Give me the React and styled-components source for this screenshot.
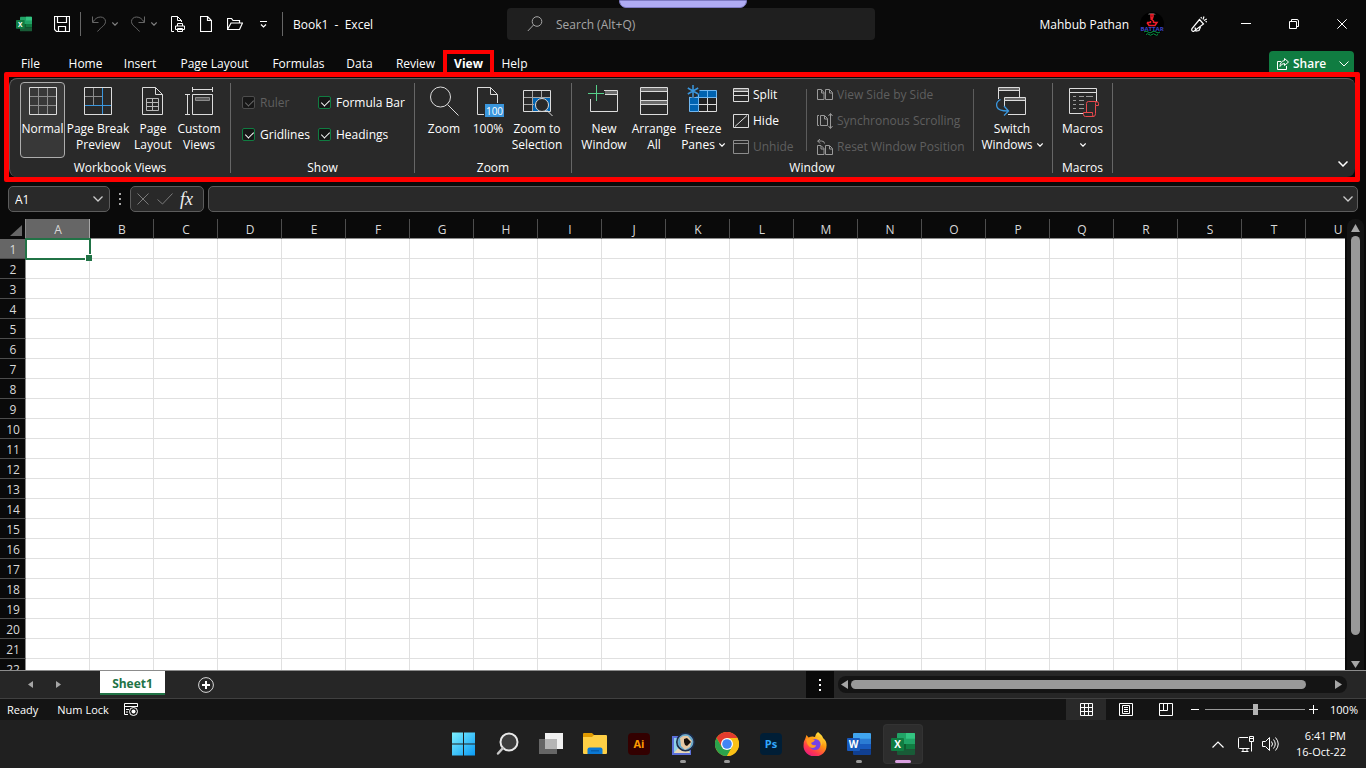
import React, {Component} from 'react';
import styled, {createGlobalStyle, css} from 'styled-components';

const GlobalStyle = createGlobalStyle`
  * { box-sizing: border-box; }
  body {
    margin: 0;
    background: #0a0a0a;
    color: #ffffff;
    font-family: "Open Sans", "Noto Sans", sans-serif;
    font-size: 12px;
    line-height: 16px;
  }
  button, input {
    font: inherit;
    color: inherit;
    background: none;
    border: 0;
    padding: 0;
    margin: 0;
  }
  svg { display: block; flex: none; }
`;

const Window = styled.div`
  display: flex;
  flex-direction: column;
  height: 100vh;
  overflow: hidden;
`;

const Row = styled.div`
  display: flex;
  align-items: center;
`;

/* title bar */
const TitleBar = styled.header`
  position: relative;
  display: grid;
  grid-template-columns: 507px minmax(200px, 368px) 1fr;
  align-items: center;
  height: 48px;
`;
const DragHandle = styled.div`
  position: absolute;
  top: 0;
  left: 50%;
  width: 128px;
  height: 8px;
  margin-left: -64px;
  background: #b0acf4;
  border: 1px solid #7f7bc4;
  border-radius: 0 0 7px 7px;
`;
const QuickAccess = styled(Row)`
  padding-left: 16px;
`;
const IconButton = styled.button`
  display: flex;
  align-items: center;
  justify-content: center;
  width: ${props => props.$w || 16}px;
  height: ${props => props.$h || 24}px;
  margin-left: ${props => props.$gap || 0}px;
  color: ${props => props.$color || '#ffffff'};
`;
const TitleLine = styled.span`
  width: 1px;
  height: 24px;
  margin-left: ${props => props.$gap}px;
  background: #666666;
`;
const TitleText = styled.span`
  padding-top: 2px;
  white-space: pre;
`;
const BookTitle = styled(TitleText)`
  margin-left: 10px;
`;
const SearchBox = styled.label`
  display: flex;
  align-items: center;
  gap: 13px;
  height: 32px;
  padding-left: 20px;
  background: #1f1f1f;
  border-radius: 4px;
  color: #a6a6a6;
  input {
    flex: 1;
    padding-top: 2px;
    outline: 0;
  }
  input::placeholder { color: #a6a6a6; opacity: 1; }
`;
const Account = styled(Row)`
  justify-content: flex-end;
`;
const Avatar = styled.svg`
  margin: 0 19px 0 11px;
`;

/* ribbon tabs */
const TabBar = styled.nav`
  display: flex;
  align-items: flex-end;
  height: 24px;
  padding: 0 12px 0 7px;
`;
const Tab = styled.button`
  width: ${props => props.$w}px;
  height: 22px;
  padding-top: 5px;
  white-space: nowrap;
  ${props => props.$active && css`
    padding-top: 1px;
    border: 4px solid #ff0000;
    border-bottom: 0;
    font-weight: 700;
  `}
`;
const ShareButton = styled.button`
  display: flex;
  align-items: center;
  width: 85px;
  height: 21px;
  margin-left: auto;
  padding: 5px 5px 0 8px;
  background: #107c41;
  border-radius: 4px 4px 0 0;
  font-weight: 600;
  svg:first-child { margin-right: 4px; }
  svg:last-child { margin-left: auto; }
`;

/* ribbon */
const RibbonFrame = styled.section`
  height: 110px;
  margin: 0 6px 0 4px;
  padding-top: 1px;
  border: 5px solid #ff0000;
  border-radius: 2px;
`;
const Ribbon = styled.div`
  display: flex;
  height: 99px;
  padding: 4px 0;
  background: #292929;
  border: 1px solid #5c5c5c;
  border-width: 1px 0 0 1px;
  border-radius: 8px;
`;
const Group = styled.div`
  display: flex;
  flex-direction: column;
  justify-content: space-between;
  width: ${props => props.$w}px;
  height: 90px;
  border-right: 1px solid #666666;
`;
const GroupBody = styled.div`
  display: flex;
  height: 76px;
  margin-top: -1px;
  padding-left: ${props => props.$pad || 0}px;
`;
const GroupLabel = styled.div`
  height: 14px;
  line-height: 18px;
  text-align: center;
`;
const BigButton = styled.button`
  display: flex;
  flex-direction: column;
  align-items: center;
  width: ${props => props.$w}px;
  height: 76px;
  padding-top: 3px;
  border-radius: 4px;
  white-space: nowrap;
  svg + span { margin-top: 4px; }
  ${props => props.$active && css`
    padding-top: 2px;
    background: #383838;
    border: 1px solid #adadad;
  `}
`;
const LabelLine = styled.span`
  display: flex;
  align-items: center;
  justify-content: center;
  gap: 4px;
  height: 16px;
`;
const CheckGrid = styled.div`
  display: grid;
  grid-template-columns: 76px auto;
  grid-auto-rows: 32px;
  padding-top: 4px;
`;
const CheckLabel = styled.label`
  display: flex;
  align-items: center;
  gap: 5px;
  white-space: nowrap;
  color: ${props => (props.$off ? '#5f5f5f' : '#ffffff')};
  span { padding-top: 2px; }
`;
const Check = styled.input`
  appearance: none;
  position: relative;
  width: 13px;
  height: 13px;
  background: #171717;
  border: 1px solid #107c41;
  border-radius: 2px;
  &:checked::after {
    content: '';
    position: absolute;
    left: 4px;
    top: 1px;
    width: 4px;
    height: 7px;
    border: solid #ffffff;
    border-width: 0 1px 1px 0;
    transform: rotate(45deg);
  }
  &:disabled { border-color: #4d4d4d; }
  &:disabled::after { border-color: #6b6b6b; }
`;
const SmallStack = styled.div`
  width: ${props => props.$w}px;
  margin-left: ${props => props.$gap}px;
`;
const SmallButton = styled.button`
  display: flex;
  align-items: center;
  gap: 4px;
  height: 26px;
  white-space: nowrap;
  color: ${props => (props.disabled ? '#5f5f5f' : '#ffffff')};
`;
const InnerLine = styled.span`
  width: 1px;
  height: 62px;
  margin-top: 7px;
  background: #5c5c5c;
`;
const Collapse = styled.button`
  margin: auto 7px 6px auto;
`;

/* formula bar */
const FormulaRow = styled.div`
  display: flex;
  height: 37px;
  padding: 4px 8px 7px;
`;
const Field = styled.div`
  display: flex;
  align-items: center;
  justify-content: space-between;
  flex: ${props => (props.$w ? 'none' : 1)};
  width: ${props => (props.$w ? props.$w + 'px' : 'auto')};
  padding: 0 ${props => props.$pad || 6}px;
  background: #292929;
  border: 1px solid #5c5c5c;
  border-radius: 5px;
  input {
    flex: 1;
    min-width: 0;
    padding-top: 2px;
    outline: 0;
  }
`;
const FxButton = styled.button`
  padding-right: 4px;
  font-family: "Liberation Serif", serif;
  font-style: italic;
  font-size: 18px;
  color: #f0f0f0;
`;
const Dots = styled.div`
  display: flex;
  flex-direction: column;
  justify-content: center;
  align-items: center;
  gap: 3px;
  width: ${props => props.$w}px;
  i {
    width: 2px;
    height: 2px;
    background: ${props => props.$color};
  }
`;

/* sheet */
const SheetArea = styled.main`
  display: grid;
  grid-template-columns: 1fr 21px;
  flex: 1;
  min-height: 0;
`;
const SheetClip = styled.div`
  overflow: hidden;
  background: #ffffff;
`;
const Sheet = styled.table`
  width: 1370px;
  table-layout: fixed;
  border-collapse: separate;
  border-spacing: 0;
  color: #d9d9d9;
  th, td {
    height: 20px;
    padding: 2px 0 0 1px;
    line-height: 16px;
    font-weight: 400;
  }
`;
const Corner = styled.th`
  width: 26px;
  background: #0a0a0a;
  border-right: 1px solid #8c8c8c;
  svg { margin-left: 9px; }
`;
const ColHead = styled.th`
  width: 64px;
  background: ${props => (props.$active ? '#666666' : '#0a0a0a')};
  border-right: 1px solid ${props => (props.$active ? '#a6a6a6' : '#4d4d4d')};
  border-bottom: 1px solid #8c8c8c;
`;
const RowHead = styled.th`
  background: ${props => (props.$active ? '#666666' : '#0a0a0a')};
  border-right: 1px solid #8c8c8c;
  border-bottom: 1px solid #4d4d4d;
`;
const Cell = styled.td`
  border-right: 1px solid #e0e0e0;
  border-bottom: 1px solid #e0e0e0;
  ${props => props.$active && css`
    position: relative;
    &::before {
      content: '';
      position: absolute;
      inset: -1px -2px -2px -1px;
      border: 2px solid #217346;
    }
    &::after {
      content: '';
      position: absolute;
      right: -3px;
      bottom: -3px;
      width: 6px;
      height: 6px;
      background: #217346;
      border: solid #ffffff;
      border-width: 1px 0 0 1px;
    }
  `}
`;
const VScroll = styled.div`
  display: flex;
  flex-direction: column;
  align-items: center;
  margin: 0 2px;
  background: #141414;
  border-radius: 8px 8px 0 0;
`;
const VThumb = styled.div`
  flex: 1;
  width: 9px;
  margin-bottom: 24px;
  background: #999999;
  border-radius: 5px;
`;

/* sheet tabs */
const SheetBar = styled.div`
  display: grid;
  grid-template-columns: 59% 1fr;
  height: 29px;
  background: #262626;
  border-top: 1px solid #8c8c8c;
  border-bottom: 1px solid #404040;
`;
const SheetTab = styled.button`
  align-self: flex-start;
  width: 65px;
  height: 24px;
  margin-left: 38px;
  padding-top: 3px;
  background: #ffffff;
  border-bottom: 2px solid #217346;
  color: #217346;
  font-weight: 700;
`;
const HScrollRow = styled.div`
  display: flex;
  align-items: center;
  padding-right: 19px;
`;
const DotsBox = styled(Dots)`
  align-self: stretch;
  margin-right: 4px;
  background: #0a0a0a;
`;
const HScroll = styled.div`
  display: flex;
  align-items: center;
  flex: 1;
  height: 17px;
  background: #141414;
  border-radius: 8px;
`;
const HThumb = styled.div`
  flex: 1;
  height: 9px;
  margin-right: 24px;
  background: #999999;
  border-radius: 5px;
`;

/* status bar */
const StatusBar = styled.footer`
  display: flex;
  align-items: center;
  height: 21px;
  padding: 0 8px 0 7px;
  background: #141414;
  font-size: 11px;
`;
const StatusText = styled.span`
  margin-right: ${props => props.$gap || 0}px;
  white-space: nowrap;
`;
const StatusRight = styled(Row)`
  margin-left: auto;
`;
const ViewButton = styled.button`
  display: flex;
  align-items: center;
  justify-content: center;
  width: 40px;
  height: 21px;
  background: ${props => (props.$active ? '#292929' : 'none')};
`;
const ZoomRange = styled.input`
  appearance: none;
  width: 100px;
  height: 11px;
  background: linear-gradient(#999999, #999999) center / 100% 1px no-repeat;
  &::-webkit-slider-thumb {
    appearance: none;
    width: 5px;
    height: 11px;
    background: #b3b3b3;
  }
`;
const ZoomValue = styled.span`
  width: 36px;
  text-align: right;
`;

/* windows taskbar */
const TaskBar = styled.footer`
  display: grid;
  grid-template-columns: 1fr auto 1fr;
  align-items: center;
  height: 48px;
  background: #202020;
`;
const TaskList = styled.div`
  display: flex;
  gap: 4px;
  grid-column: 2;
`;
const TaskButton = styled.button`
  position: relative;
  display: flex;
  align-items: center;
  justify-content: center;
  width: 40px;
  height: 40px;
  border-radius: 4px;
  ${props => props.$active && css`
    background: #2d2d2d;
    outline: 1px solid #333333;
    outline-offset: -1px;
  `}
  ${props => props.$running && css`
    &::after {
      content: '';
      position: absolute;
      left: 50%;
      bottom: 1px;
      width: ${props.$active ? 16 : 6}px;
      height: 3px;
      margin-left: ${props.$active ? -8 : -3}px;
      background: ${props.$active ? '#d9a0e0' : '#9a9a9a'};
      border-radius: 2px;
    }
  `}
`;
const Tray = styled(Row)`
  justify-content: flex-end;
  padding-right: 20px;
`;
const Clock = styled.time`
  width: 67px;
  text-align: right;
  white-space: nowrap;
  font-size: 11px;
`;

const Svg = ({w = 16, h, box, children, ...rest}) => (
  <svg width={w} height={h || w} viewBox={box || `0 0 ${w} ${h || w}`} fill="none" stroke="currentColor" aria-hidden="true" {...rest}>
    {children}
  </svg>
);

const Chevron = ({w = 10, sw = 1}) => (
  <Svg w={w} h={w / 2 + 1} box="0 0 10 6" strokeWidth={sw}><path d="M.5.5 5 5 9.5.5" /></Svg>
);

const Triangle = ({d, w, h}) => (
  <Svg w={w} h={h} stroke="none" fill="#a6a6a6"><path d={d} /></Svg>
);

/* letter tile logo shared by Excel and Word */
const OfficeLogo = ({size, letter, colors}) => (
  <svg width={size} height={size} viewBox="0 0 24 24" aria-hidden="true">
    <path d="M7 1h16a1 1 0 0 1 1 1v5.5H6V2a1 1 0 0 1 1-1z" fill={colors[0]} />
    {letter === 'X' && <path d="M15 1h8a1 1 0 0 1 1 1v5.5h-9z" fill="#33c481" />}
    <path d="M6 6.700h18V12H6z" fill={colors[1]} />
    <path d="M6 12h18v5.5H6z" fill={colors[2]} />
    <path d="M6 17.5h18V22a1 1 0 0 1-1 1H7a1 1 0 0 1-1-1z" fill={colors[3]} />
    {letter === 'X' && <path d="M6 12h9v5.5H6z" fill="#0e5c30" />}
    <rect x="0" y="6" width="13" height="13" rx="1" fill={colors[4]} />
    <text x="6.5" y="16" fontSize="10" fontWeight="700" textAnchor="middle" fill="#fff" fontFamily="Open Sans, sans-serif">{letter}</text>
  </svg>
);
const excelColors = ['#21a366', '#21a366', '#107c41', '#185c37', '#107c41'];
const wordColors = ['#41a5ee', '#2b7cd3', '#185abd', '#103f91', '#185abd'];

const icons = {
  normal: (
    <Svg w={32}><path d="M11.5 3v26M20.5 3v26M3 11.5h26M3 20.5h26" stroke="#8c8c8c" /><path d="M2.5 2.5h27v27h-27z" stroke="#dcdcdc" /></Svg>
  ),
  pageBreak: (
    <Svg w={32}><path d="M11.5 3v17M3 11.5h17" stroke="#8c8c8c" /><path d="M2.5 2.5h27v27h-27z" stroke="#dcdcdc" /><path d="M20.5 3v26M3 20.5h26" stroke="#3a96dd" /></Svg>
  ),
  pageLayout: (
    <Svg w={32} stroke="#dcdcdc"><path d="M5.5 2.5h13l7 7v20h-20zM18.5 2.5v7h7" /><path d="M9.5 13.5h12v12h-12zM15.5 14v11M10 17.5h11M10 21.5h11" stroke="#b8b8b8" /></Svg>
  ),
  customViews: (
    <Svg w={32} stroke="#dcdcdc"><path d="M9.5 2v5M29.5 2v5M10 4.5h19M2 9.5h5M2 29.5h5M4.5 10v19M9.5 9.5h20v20h-20z" /><path d="M12.5 12.5h14v3h-14z" fill="#5c5c5c" stroke="#8c8c8c" /></Svg>
  ),
  zoom: (
    <Svg w={32} stroke="#dcdcdc"><circle cx="12.5" cy="12" r="10" /><path d="m19.5 19.5 11 11" /></Svg>
  ),
  hundred: (
    <Svg w={32} stroke="#dcdcdc">
      <path d="M12 29.5H5.5v-27h13l7 7V18M18.5 2.5v7h7" />
      <path d="M13 19h19v13H13z" fill="#3a96dd" stroke="none" />
      <text x="22.5" y="29.5" fontSize="10" textAnchor="middle" fill="#fff" stroke="none" fontFamily="Open Sans, sans-serif">100</text>
    </Svg>
  ),
  zoomSelection: (
    <Svg w={32} stroke="#dcdcdc">
      <path d="M12 13h17v14H12z" fill="#0063b1" stroke="none" />
      <path d="M11.5 5v22M20.5 5v8M3 12.5h27M3 19.5h10" stroke="#a6a6a6" />
      <path d="M2.5 5.5h27v21h-27z" />
      <circle cx="21" cy="20" r="6.5" fill="#292929" /><path d="m25.5 25 6 6" />
    </Svg>
  ),
  newWindow: (
    <Svg w={32} stroke="#dcdcdc"><path d="M17 6h13v4H17z" fill="#6b6b6b" stroke="none" /><path d="M16 5.5h13.5v21h-27V14M17 9.5h12" /><path d="M8.5 0v16M0 8.5h16" stroke="#57d08a" /></Svg>
  ),
  arrange: (
    <Svg w={32} stroke="#dcdcdc"><path d="M3 3h26v3H3zM3 16h26v3H3z" fill="#6b6b6b" stroke="none" /><path d="M2.5 2.5h27v27h-27zM3 6.5h26M3 15.5h26M3 19.5h26" /></Svg>
  ),
  freeze: (
    <Svg w={32} stroke="#9a9a9a">
      <path d="M12 13h18v14H12z" fill="#222" stroke="none" />
      <path d="M11.5 5.5h18v7h-18v14h-9v-14h9z" fill="#0063b1" stroke="none" />
      <path d="M2.5 6v8h9V5.5z" fill="#0063b1" stroke="none" />
      <path d="M20.5 13v14M12 19.5h18M29.5 12v14.5H12" stroke="#dcdcdc" />
      <path d="M11 5.5h18.5v7H3M2.5 12v14.5h9V6M20.5 6v6M3 19.5h8" stroke="#6fb6f0" />
      <circle cx="6" cy="6" r="6.5" fill="#292929" stroke="none" />
      <path d="M6 0v12M.8 3l10.400 6M.8 9l10.400-6" stroke="#3a96dd" strokeWidth="1.5" />
    </Svg>
  ),
  switchWindows: (
    <Svg w={32} stroke="#dcdcdc">
      <path d="M3 3h20v3H3zM9 13h20v3H9z" fill="#6b6b6b" stroke="none" />
      <path d="M2.5 14V2.5h21V12M3 5.5h20M12 29.5h17.5v-17h-21v9M9 15.5h20" />
      <path d="M4.5 14.5C1.5 16 0 19 1 22c1 3 4 4 11 4M8 21l4.5 5L8 30.5" stroke="#3a96dd" strokeWidth="1.300" />
    </Svg>
  ),
  macros: (
    <Svg w={32} stroke="#dcdcdc">
      <path d="M17 28.5H2.5v-25h27V17M3 7.5h26" />
      <path d="M6 11.5h3M12 11.5h5M19 11.5h7M6 15.5h3M12 15.5h5M6 19.5h3M12 19.5h5M6 23.5h3M12 23.5h5" stroke="#9a9a9a" />
      <path d="M19.5 27.5v-9q0-2 2-2h8q2 0 2 2v2h-3v8q0 3-2 3h-8q-2 0-2-2v-2h9v2q0 2 1.5 2M28.5 20.5v-2q0-2 1.5-2" stroke="#e8484d" />
    </Svg>
  ),
  split: <Svg><path d="M1 2h14v3H1z" fill="#6b6b6b" stroke="none" /><path d="M.5 1.5h15v13H.5zM1 4.5h14M1 8.5h14" stroke="#dcdcdc" /></Svg>,
  hide: <Svg><path d="M.5 1.5h15v13H.5zM2 13.5 14 2.5" stroke="#dcdcdc" /></Svg>,
  unhide: <Svg><path d="M.5 1.5h15v13H.5zM1 4.5h14" stroke="#8c8c8c" /></Svg>,
  sideBySide: <Svg stroke="#9a9a9a"><path d="M.5 2.5h4l2.5 3v7H.5zM4.5 3v3H7M8.5 2.5h4l3 3v7h-7zM12.5 3v3h3" /></Svg>,
  syncScroll: <Svg stroke="#9a9a9a"><path d="M2 2.5H.5v10H2M3.5 2.5h4l3 3v7h-7zM7.5 3v3h3M13.5 1v14M11.5 3l2-2.5 2 2.5M11.5 13l2 2.5 2-2.5" /></Svg>,
  resetPos: <Svg stroke="#9a9a9a"><path d="M.5 6.5h3.5l3 3v6H.5zM4 7v3h3M8.5 6.5h4l3 3v6h-7zM12.5 7v3h3M7.5 4.5q0-2.5-3-2.5H.5M3 0 .8 2 3 4.5" /></Svg>,
};

const tabs = [
  ['File', 47], ['Home', 63], ['Insert', 46], ['Page Layout', 103], ['Formulas', 65],
  ['Data', 57], ['Review', 55], ['View', 51], ['Help', 41],
];

const Tool = ({icon, w, lines, active, menu}) => (
  <BigButton $w={w} $active={active}>
    {icons[icon]}
    {lines.map((line, i) => (
      <LabelLine key={line}>
        {line}
        {menu && i === lines.length - 1 && <Chevron w={6} sw={2} />}
      </LabelLine>
    ))}
  </BigButton>
);

const CheckItem = ({name, off, checked, onToggle}) => (
  <CheckLabel $off={off}>
    <Check type="checkbox" checked={checked} disabled={off} onChange={() => onToggle(name)} />
    <span>{name}</span>
  </CheckLabel>
);

const SmallTool = ({icon, name, off}) => (
  <SmallButton disabled={off}>{icons[icon]}{name}</SmallButton>
);

const Title = () => (
  <TitleBar>
    <QuickAccess>
      <OfficeLogo size={16} letter="X" colors={excelColors} />
      <IconButton $gap={22} aria-label="Save">
        <Svg><path d="M.5.5h15v15h-13l-2-2zM3.5.5v6h9v-6M4.5 15.5v-5h7v5" strokeWidth="1.200" /></Svg>
      </IconButton>
      <TitleLine $gap={10} />
      <IconButton $gap={11} $w={14} $color="#666666" aria-label="Undo">
        <Svg w={14} h={16}><path d="M.5.5v6h6M.8 6C3 3 5 1 8.5 1c3 0 5 2 5 4.5 0 4-4.5 5.5-8 10" /></Svg>
      </IconButton>
      <IconButton $gap={6} $w={6} $color="#808080" aria-label="Undo list"><Chevron w={6} sw={2} /></IconButton>
      <IconButton $gap={13} $w={14} $color="#666666" aria-label="Redo">
        <Svg w={14} h={16}><path d="M13.5.5v6h-6M13.200 6C11 3 9 1 5.5 1c-3 0-5 2-5 4.5 0 4 4.5 5.5 8 10" /></Svg>
      </IconButton>
      <IconButton $gap={6} $w={6} $color="#808080" aria-label="Redo list"><Chevron w={6} sw={2} /></IconButton>
      <IconButton $gap={14} $w={14} aria-label="Print preview">
        <Svg w={14} h={16}><path d="M3 15.5H.5V.5h6l4 4V6M6.5.5v4h4M6.5 10V7.5h5V10M4.5 13.5v-3.5h9v3.5zM6.5 12.5h5v3h-5z" /></Svg>
      </IconButton>
      <IconButton $gap={15} $w={12} aria-label="New">
        <Svg w={12} h={16}><path d="M.5.5h7l4 4v11H.5zM7.5.5v4h4" strokeWidth="1.200" /></Svg>
      </IconButton>
      <IconButton $gap={15} $w={16} aria-label="Open">
        <Svg h={12}><path d="M.5 11.5v-11h4l1.5 2h6.5v2.5M.5 11.5l3.5-6.5h11.5l-3 6.5z" strokeWidth="1.200" /></Svg>
      </IconButton>
      <IconButton $gap={17} $w={7} aria-label="Customize toolbar">
        <Svg w={7} h={7}><path d="M0 .5h7M1 3.5 3.5 6 6 3.5" strokeWidth="1.200" /></Svg>
      </IconButton>
      <TitleLine $gap={15} />
      <BookTitle>{'Book1  -  Excel'}</BookTitle>
    </QuickAccess>
    <SearchBox>
      <Svg w={16}><circle cx="10" cy="5.5" r="4.800" /><path d="M6.5 9 .8 15" /></Svg>
      <input type="text" placeholder="Search (Alt+Q)" aria-label="Search" />
    </SearchBox>
    <Account>
      <TitleText>Mahbub Pathan</TitleText>
      <Avatar width="24" height="24" viewBox="0 0 24 24">
        <circle cx="12" cy="12" r="12" fill="#000" />
        <path d="M9 1h5l2 2H8z" fill="#444" />
        <path d="M13.5 2.500h-2.500v3l2 1.500M13 2v3l-2 2 2.500 2v2M7 10.500h3.500v-1.500M7 10.500l2 3h6l2-3h-3.500" fill="none" stroke="#f01c28" strokeWidth="1.5" />
        <text x="12" y="18.5" fontSize="6" fontWeight="700" textAnchor="middle" fill="#3f45cc" fontFamily="Open Sans, sans-serif">BATTAR</text>
        <path d="M4 20q2-2 4 0t4 0 4 0 4 0M6 22.5q1.5-1.5 3 0t3 0 3 0 3 0" fill="none" stroke="#0a9a4a" />
      </Avatar>
      <IconButton $w={32} aria-label="Coming soon">
        <Svg><path d="M8.5 3.5 1 12.5q-1 2.5 1.5 3L12.5 8zM4 11.5l1 3.5 3-.5 1.5-3.5M10 1l.5 1.5M13 .5l-1 3M15.800 3l-2.800 1.5M16 6l-1.5-.5" strokeWidth="1.200" /></Svg>
      </IconButton>
      <IconButton $gap={7} $w={48} aria-label="Minimize"><Svg w={10}><path d="M0 4.5h10" /></Svg></IconButton>
      <IconButton $w={48} aria-label="Restore"><Svg w={10}><path d="M.5 2.5h7v7h-7zM2.5 2.5v-2h5.5q1.5 0 1.5 1.5v5.5h-2" /></Svg></IconButton>
      <IconButton $w={48} aria-label="Close"><Svg w={10}><path d="m.3.3 9.400 9.400M9.700.3.3 9.700" /></Svg></IconButton>
    </Account>
    <DragHandle />
  </TitleBar>
);

const RibbonPanel = ({checks, onToggle}) => (
  <RibbonFrame>
    <Ribbon>
      <Group $w={221}>
        <GroupBody $pad={10}>
          <Tool icon="normal" w={45} lines={['Normal']} active />
          <Tool icon="pageBreak" w={66} lines={['Page Break', 'Preview']} />
          <Tool icon="pageLayout" w={44} lines={['Page', 'Layout']} />
          <Tool icon="customViews" w={48} lines={['Custom', 'Views']} />
        </GroupBody>
        <GroupLabel>Workbook Views</GroupLabel>
      </Group>
      <Group $w={184}>
        <GroupBody $pad={11}>
          <CheckGrid>
            <CheckItem name="Ruler" off checked={checks['Ruler']} onToggle={onToggle} />
            <CheckItem name="Formula Bar" checked={checks['Formula Bar']} onToggle={onToggle} />
            <CheckItem name="Gridlines" checked={checks['Gridlines']} onToggle={onToggle} />
            <CheckItem name="Headings" checked={checks['Headings']} onToggle={onToggle} />
          </CheckGrid>
        </GroupBody>
        <GroupLabel>Show</GroupLabel>
      </Group>
      <Group $w={157}>
        <GroupBody $pad={7}>
          <Tool icon="zoom" w={44} lines={['Zoom']} />
          <Tool icon="hundred" w={44} lines={['100%']} />
          <Tool icon="zoomSelection" w={54} lines={['Zoom to', 'Selection']} />
        </GroupBody>
        <GroupLabel>Zoom</GroupLabel>
      </Group>
      <Group $w={481}>
        <GroupBody $pad={7}>
          <Tool icon="newWindow" w={50} lines={['New', 'Window']} />
          <Tool icon="arrange" w={50} lines={['Arrange', 'All']} />
          <Tool icon="freeze" w={48} lines={['Freeze', 'Panes']} menu />
          <SmallStack $w={73} $gap={6}>
            <SmallTool icon="split" name="Split" />
            <SmallTool icon="hide" name="Hide" />
            <SmallTool icon="unhide" name="Unhide" off />
          </SmallStack>
          <InnerLine />
          <SmallStack $w={156} $gap={10}>
            <SmallTool icon="sideBySide" name="View Side by Side" off />
            <SmallTool icon="syncScroll" name="Synchronous Scrolling" off />
            <SmallTool icon="resetPos" name="Reset Window Position" off />
          </SmallStack>
          <InnerLine />
          <Tool icon="switchWindows" w={76} lines={['Switch', 'Windows']} menu />
        </GroupBody>
        <GroupLabel>Window</GroupLabel>
      </Group>
      <Group $w={60}>
        <GroupBody>
          <BigButton $w={60}>
            {icons.macros}
            <LabelLine>Macros</LabelLine>
            <LabelLine><Chevron w={6} sw={2} /></LabelLine>
          </BigButton>
        </GroupBody>
        <GroupLabel>Macros</GroupLabel>
      </Group>
      <Collapse aria-label="Collapse ribbon"><Chevron w={10} sw={1.5} /></Collapse>
    </Ribbon>
  </RibbonFrame>
);

const FormulaBar = () => (
  <FormulaRow>
    <Field $w={102}>
      <input type="text" defaultValue="A1" aria-label="Name box" />
      <IconButton $w={10} $color="#cccccc" aria-label="Names"><Chevron w={10} sw={1.3} /></IconButton>
    </Field>
    <Dots $w={20} $color="#a6a6a6"><i /><i /><i /></Dots>
    <Field $w={74}>
      <IconButton $w={12} $color="#7a7a7a" aria-label="Cancel"><Svg w={12}><path d="m.5.5 11 11M11.5.5l-11 11" /></Svg></IconButton>
      <IconButton $w={16} $color="#7a7a7a" aria-label="Enter"><Svg w={16} h={12}><path d="m.5 6.5 5 4.5L15.5.5" /></Svg></IconButton>
      <FxButton aria-label="Insert function">fx</FxButton>
    </Field>
    <Dots $w={4} />
    <Field $pad={4}>
      <input type="text" aria-label="Formula" />
      <IconButton $w={10} $color="#cccccc" aria-label="Expand"><Chevron w={10} sw={1.3} /></IconButton>
    </Field>
  </FormulaRow>
);

const columns = 'ABCDEFGHIJKLMNOPQRSTU'.split('');
const rows = Array.from({length: 22}, (_, i) => i + 1);

const Grid = () => (
  <SheetArea>
    <SheetClip>
      <Sheet>
        <thead>
          <tr>
            <Corner aria-label="Select all"><Svg w={12} h={11} stroke="none" fill="#666666"><path d="M12 0v11H0z" /></Svg></Corner>
            {columns.map(c => <ColHead key={c} $active={c === 'A'}>{c}</ColHead>)}
          </tr>
        </thead>
        <tbody>
          {rows.map(r => (
            <tr key={r}>
              <RowHead $active={r === 1}>{r}</RowHead>
              {columns.map(c => <Cell key={c} $active={r === 1 && c === 'A'} />)}
            </tr>
          ))}
        </tbody>
      </Sheet>
    </SheetClip>
    <VScroll>
      <IconButton $w={17} $h={17} aria-label="Scroll up"><Triangle w={9} h={8} d="M4.5 0 9 8H0z" /></IconButton>
      <VThumb />
      <IconButton $w={17} $h={11} aria-label="Scroll down"><Triangle w={9} h={7} d="M0 0h9L4.5 7z" /></IconButton>
    </VScroll>
  </SheetArea>
);

const SheetTabs = () => (
  <SheetBar>
    <Row>
      <IconButton $gap={26} $w={8} aria-label="Previous sheet"><Triangle w={5} h={7} d="M5 0v7L0 3.5z" /></IconButton>
      <IconButton $gap={20} $w={8} aria-label="Next sheet"><Triangle w={5} h={7} d="M0 0v7l5-3.5z" /></IconButton>
      <SheetTab>Sheet1</SheetTab>
      <IconButton $gap={33} $w={16} aria-label="New sheet">
        <Svg><circle cx="8" cy="8" r="7.400" stroke="#d9d9d9" /><path d="M8 4v8M4 8h8" strokeWidth="2" /></Svg>
      </IconButton>
    </Row>
    <HScrollRow>
      <DotsBox $w={28} $color="#ffffff"><i /><i /><i /></DotsBox>
      <HScroll>
        <IconButton $w={13} $h={17} aria-label="Scroll left"><Triangle w={7} h={9} d="M7 0v9L0 4.5z" /></IconButton>
        <HThumb />
        <IconButton $w={17} $h={17} aria-label="Scroll right"><Triangle w={7} h={9} d="M0 0v9l7-4.5z" /></IconButton>
      </HScroll>
    </HScrollRow>
  </SheetBar>
);

const Status = ({zoom, onZoom}) => (
  <StatusBar>
    <StatusText $gap={19}>Ready</StatusText>
    <StatusText $gap={15}>Num Lock</StatusText>
    <Svg w={14} h={13}><path d="M4 11.5H.5V.5h13V4M.5 3.5h13M2 6.5h3M2 9h2" /><circle cx="9.5" cy="8.5" r="4" /><circle cx="9.5" cy="8.5" r="2" fill="#fff" stroke="none" /></Svg>
    <StatusRight>
      <ViewButton $active aria-label="Normal view"><Svg w={13}><path d="M.5.5h12v12H.5zM4.5 0v13M8.5 0v13M0 4.5h13M0 8.5h13" /></Svg></ViewButton>
      <ViewButton aria-label="Page layout view"><Svg w={14} h={13}><path d="M.5.5h13v12H.5zM3.5 2.5h7v8h-7zM5 4.5h4M5 6.5h4M5 8.5h4" /></Svg></ViewButton>
      <ViewButton aria-label="Page break view"><Svg w={14} h={13}><path d="M.5.5h13v12H.5zM.5 7.5h8v-7M4.5.5v7" /></Svg></ViewButton>
      <IconButton $w={19} $h={20} aria-label="Zoom out"><Svg w={9}><path d="M0 4.5h8" /></Svg></IconButton>
      <ZoomRange type="range" min="0" max="200" value={zoom} onChange={onZoom} aria-label="Zoom" />
      <IconButton $w={17} $h={20} aria-label="Zoom in"><Svg w={9}><path d="M0 4.5h9M4.5 0v9" /></Svg></IconButton>
      <ZoomValue>{zoom}%</ZoomValue>
    </StatusRight>
  </StatusBar>
);

const AdobeTile = ({bg, color, children}) => (
  <svg width="22" height="22" viewBox="0 0 22 22" aria-hidden="true">
    <rect width="22" height="22" rx="4" fill={bg} />
    <text x="11" y="15" fontSize="11" fontWeight="700" textAnchor="middle" fill={color} fontFamily="Open Sans, sans-serif">{children}</text>
  </svg>
);

const Tasks = () => (
  <TaskList>
    <TaskButton aria-label="Start">
      <svg width="24" height="24" viewBox="0 0 24 24">
        <defs><linearGradient id="win" x1="0" y1="0" x2="1" y2="1"><stop offset="0" stopColor="#7df0ff" /><stop offset="1" stopColor="#0a9bf5" /></linearGradient></defs>
        <path d="M1 .5h11v11H1zM13 .5h11v11H13zM1 12.5h11v11H1zM13 12.5h11v11H13z" fill="url(#win)" />
      </svg>
    </TaskButton>
    <TaskButton aria-label="Search">
      <svg width="24" height="24" viewBox="0 0 24 24" fill="none"><circle cx="14" cy="10" r="8.5" fill="#3d3d3d" stroke="#e8e8e8" strokeWidth="2" /><path d="m8 16-5 5.5" stroke="#c8c8c8" strokeWidth="2.5" strokeLinecap="round" /></svg>
    </TaskButton>
    <TaskButton aria-label="Task view">
      <svg width="26" height="24" viewBox="0 0 26 24"><path d="M1 7h18v15H1z" fill="#666" /><path d="M7 1h18v16H7z" fill="#f0f0f0" /><path d="M7 7h12v10H7z" fill="#b5b5b5" /></svg>
    </TaskButton>
    <TaskButton aria-label="File Explorer">
      <svg width="24" height="24" viewBox="0 0 24 24">
        <path d="M0 2q0-1 1-1h8l2 2v4H0z" fill="#e09a00" />
        <path d="M0 5h9l2-2h12q1 0 1 1v17q0 1-1 1H1q-1 0-1-1z" fill="#fecf45" />
        <path d="M4.5 22v-4.5q0-2 2-2h11q2 0 2 2V22z" fill="#0a78d4" /><path d="M8 18h8v1.5H8z" fill="#065fae" />
      </svg>
    </TaskButton>
    <TaskButton aria-label="Illustrator"><AdobeTile bg="#330000" color="#ff9a00">Ai</AdobeTile></TaskButton>
    <TaskButton $running aria-label="Photo viewer">
      <svg width="24" height="24" viewBox="0 0 24 24">
        <path d="M1 4h19v19H1z" fill="#5b6fd8" /><path d="M3 6h16v15H3z" fill="#8fd0e8" /><path d="m3 21 5-6 4 3 3-2 4 5z" fill="#e8d8b8" />
        <circle cx="14.5" cy="10" r="8.5" fill="#58a8d0" stroke="#1b2c4a" strokeWidth="2" />
        <path d="M9 6q3-3 8-2l4 5-2 6-5 3-4-4z" fill="#e6c8a4" /><path d="m13 7 3-1 4 4-4 4-2-1-1-3z" fill="#17100c" />
        <circle cx="14.5" cy="10" r="7.5" fill="none" stroke="#9ccbe8" strokeWidth=".6" />
      </svg>
    </TaskButton>
    <TaskButton $running aria-label="Chrome">
      <svg width="24" height="24" viewBox="0 0 24 24">
        <circle cx="12" cy="12" r="12" fill="#fbc116" />
        <path d="M1.600 6A12 12 0 0 1 22.400 6H12L6.800 15z" fill="#e33b2e" />
        <path d="M1.600 6A12 12 0 0 0 12 24l5.200-9H6.800z" fill="#2ba24c" />
        <path d="M22.400 6A12 12 0 0 1 12 24l5.200-9L16 8l-4-2z" fill="#fbc116" />
        <circle cx="12" cy="12" r="6" fill="#fff" /><circle cx="12" cy="12" r="4.800" fill="#4285f4" />
      </svg>
    </TaskButton>
    <TaskButton aria-label="Photoshop"><AdobeTile bg="#001e36" color="#31a8ff">Ps</AdobeTile></TaskButton>
    <TaskButton aria-label="Firefox">
      <svg width="24" height="24" viewBox="0 0 24 24">
        <defs><linearGradient id="fox" x1=".8" y1="0" x2=".2" y2="1"><stop offset="0" stopColor="#fff04a" /><stop offset=".4" stopColor="#ff980e" /><stop offset=".75" stopColor="#ff3750" /><stop offset="1" stopColor="#e31587" /></linearGradient></defs>
        <path d="M15 0q5 4 5 6 4 3 3.5 8a11.5 10.5 0 0 1-23 0Q.5 9 2.5 6l1-3 2 2.5Q9 4 12 5q0-3 3-5z" fill="url(#fox)" />
        <circle cx="12" cy="12.5" r="5.5" fill="#7542e5" />
        <path d="M3 7q4-2 6 0l3 1q-1 2-4 3 1 3 5 2 0 3-4 3-5-1-6-9z" fill="#ff9a1f" />
        <path d="M13 6q6 2 5 8 3-4 0-8z" fill="#ffbd2e" />
      </svg>
    </TaskButton>
    <TaskButton $running aria-label="Word"><OfficeLogo size={24} letter="W" colors={wordColors} /></TaskButton>
    <TaskButton $running $active aria-label="Excel"><OfficeLogo size={24} letter="X" colors={excelColors} /></TaskButton>
  </TaskList>
);

class App extends Component {
  state = {
    tab: 'View',
    zoom: 100,
    checks: {'Ruler': true, 'Formula Bar': true, 'Gridlines': true, 'Headings': true},
  };

  toggleHandler = (name) => {
    this.setState(({checks}) => ({checks: {...checks, [name]: !checks[name]}}));
  };

  zoomHandler = (e) => {
    this.setState({zoom: Number(e.target.value)});
  };

  render() {
    const {tab, zoom, checks} = this.state;
    return (
      <Window>
        <GlobalStyle />
        <Title />
        <TabBar>
          {tabs.map(([name, w]) => (
            <Tab key={name} $w={w} $active={name === tab} onClick={() => this.setState({tab: name})}>{name}</Tab>
          ))}
          <ShareButton>
            <Svg w={12} h={12}><path d="M4 3.5H.5v8h9V8M7.5.5l4 3.5-4 3.5v-2q-3 0-4.5 3 0-5 4.5-6z" /></Svg>
            Share
            <Chevron w={10} />
          </ShareButton>
        </TabBar>
        <RibbonPanel checks={checks} onToggle={this.toggleHandler} />
        <FormulaBar />
        <Grid />
        <SheetTabs />
        <Status zoom={zoom} onZoom={this.zoomHandler} />
        <TaskBar>
          <Tasks />
          <Tray>
            <IconButton $w={12} aria-label="Hidden icons"><Svg w={12} h={7}><path d="m.5 6.5 5.5-5.5 5.5 5.5" strokeWidth="1.200" /></Svg></IconButton>
            <IconButton $gap={14} $w={16} aria-label="Network"><Svg><path d="M10 1.5H1.5q-1 0-1 1v9q0 1 1 1h10M5 12.5v3M9 12.5v3M3.5 15.5h7M11.5.5h4v5h-4zM13.5 5.5v10M12 2.5h3" /></Svg></IconButton>
            <IconButton $gap={8} $w={17} aria-label="Volume"><Svg w={17} h={14}><path d="M.5 4.5h3l4-4v13l-4-4h-3zM9.5 4.5q2 2.5 0 5M11.5 2.5q3.5 4.5 0 9M13.5.5q5.5 6.5 0 13" /></Svg></IconButton>
            <Clock>6:41 PM<br />16-Oct-22</Clock>
          </Tray>
        </TaskBar>
      </Window>
    );
  }
}

export default App;
